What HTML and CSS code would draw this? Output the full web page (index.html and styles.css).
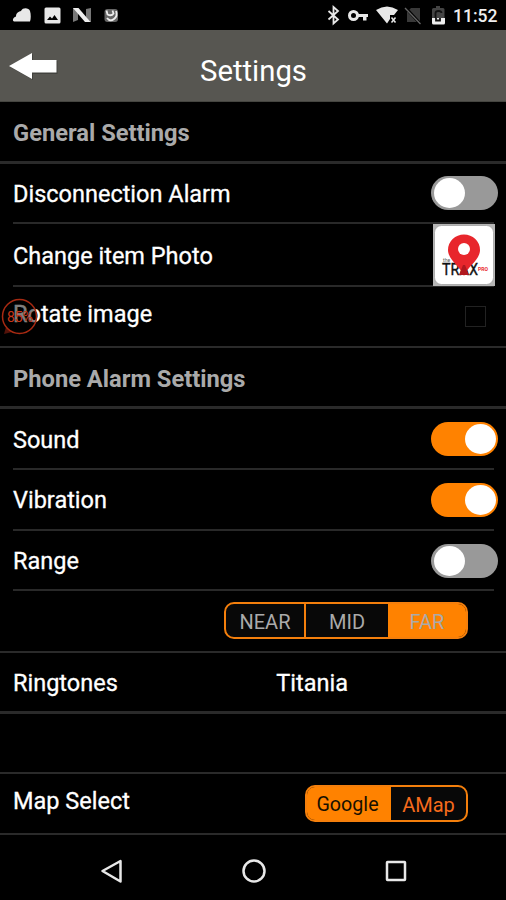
FILE: index.html
```html
<!DOCTYPE html>
<html lang="en">
<head>
<meta charset="utf-8">
<title>Settings</title>
<link rel="stylesheet" href="styles.css">
</head>
<body>
<div class="phone">
  <div class="status">
    <svg class="status-left" width="120" height="30" viewBox="0 0 120 30">
      <path d="M14 21.500c-2-1-1-4 2-5 0-4 3-5 5-5.500 2-4 8-3 9 0 1 3 1 8 0 10.500z" fill="#e8e8e8"/>
      <path d="M46 7.500h13q1.500 0 1.500 1.500v13q0 1.500-1.500 1.500H46q-1.500 0-1.500-1.500V9q0-1.500 1.500-1.500zM47 20h11l-3.500-5-2.500 3.500-2-2z" fill="#e8e8e8" fill-rule="evenodd"/>
      <path d="M73 8h5v12l-5 2zM86 9l5-1v14h-5z" fill="#777"/>
      <path d="M73 8h5.500l12 14H85z" fill="#eee"/>
      <rect x="104.500" y="9" width="13.500" height="13" rx="3" fill="#666"/>
      <path d="M106.500 10.500l1 4q4 2 6-1l-1-3M107 18q3 4 7 1 4-3 2-8" fill="none" stroke="#eee" stroke-width="1.800"/>
    </svg>
    <svg class="status-right" width="125" height="30" viewBox="325 0 125 30">
      <path d="M328.500 11l9.500 8.500-4.500 4V7l4.500 4-9.500 8.500" fill="none" stroke="#e8e8e8" stroke-width="1.800"/>
      <circle cx="353.500" cy="15.500" r="4" fill="none" stroke="#e8e8e8" stroke-width="3"/>
      <path d="M357 14h11v3h-1.500v3.500H363V17h-6z" fill="#e8e8e8"/>
      <path d="M376 10q11-7 22 0l-4 5h-4v4l-3 4.500z" fill="#e8e8e8"/>
      <path d="M391.500 17.500l4 5m0-5l-4 5" stroke="#e8e8e8" stroke-width="1.500"/>
      <path d="M411 8h9v14h-13V12z" fill="#393939"/>
      <path d="M405 7l15.500 17" stroke="#000" stroke-width="3"/>
      <path d="M405 8l15.500 16" stroke="#666" stroke-width="1.300"/>
      <path d="M436 6h4v2h3q1.500 0 1.500 1.500V18H432V9.500q0-1.500 1.500-1.500h2.500z" fill="#444"/>
      <path d="M432 18h13v5q0 1.500-1.500 1.500h-10q-1.500 0-1.500-1.500z" fill="#eee"/>
      <path d="M435.500 18v-5q0-2 3-2t3 2M436 18v2.500h4V18" stroke="#111" stroke-width="1.800" fill="none"/>
    </svg>
    <span class="clock">11:52</span>
  </div>
  <header class="header">
    <svg class="back" width="50" height="30" viewBox="0 0 50 30"><path d="M1 15L24 2v7h24.500v13H24v6z" fill="#42423e"/><path d="M0 14L23 1v7h24.500v12.500H23V27z" fill="#fff"/></svg>
    <h1>Settings</h1>
  </header>
  <main>
    <section class="row heading general"><span>General Settings</span></section>
    <section class="row disconnect inset"><span>Disconnection Alarm</span><i class="toggle"></i></section>
    <section class="row photo inset"><span>Change item Photo</span>
      <svg class="thumb" width="62" height="62" viewBox="0 0 62 62">
        <rect width="62" height="62" fill="#b5b5b5"/><rect x="1.500" y="1.500" width="59" height="59" rx="7" fill="#fff" stroke="#999" stroke-width=".7"/>
        <text x="9" y="51" class="brand" textLength="36" lengthAdjust="spacingAndGlyphs">TRAX</text>
        <path d="M31 52C28 43 15 36 15 26a16 15.500 0 0 1 32 0c0 10-13 17-16 26z" fill="#e8262c"/>
        <circle cx="31" cy="25" r="6" fill="#fff"/>
        <path d="M26 51l4-10h2l4 10z" fill="#b0181f"/>
        <text x="10" y="38" class="tiny">the</text><text x="45" y="47" class="tiny red">PRO</text>
      </svg>
    </section>
    <section class="row rotate"><span>Rotate image</span><i class="check"></i>
      <svg class="stamp" width="40" height="40" viewBox="0 0 40 40">
        <path d="M6 30l-2 7 8-2" fill="#54130a"/><circle cx="19.500" cy="19.500" r="17" fill="#000" fill-opacity=".5" stroke="#a82a12" stroke-width="1.500"/>
        <text x="7" y="25" textLength="26" lengthAdjust="spacingAndGlyphs">85%</text>
      </svg>
    </section>
    <section class="row heading alarm"><span>Phone Alarm Settings</span></section>
    <section class="row sound inset"><span>Sound</span><i class="toggle on"></i></section>
    <section class="row vibration inset"><span>Vibration</span><i class="toggle on"></i></section>
    <section class="row range inset"><span>Range</span><i class="toggle"></i></section>
    <section class="row distances"><div class="segments distance"><span>NEAR</span><span>MID</span><span class="selected">FAR</span></div></section>
    <section class="row ringtones"><span>Ringtones</span><span class="tone">Titania</span></section>
    <section class="row empty"></section>
    <section class="row maps"><span>Map Select</span><div class="segments map"><span class="selected">Google</span><span>AMap</span></div></section>
  </main>
  <nav class="nav">
    <svg width="506" height="65" viewBox="0 835 506 65" fill="none" stroke="#e8e8e8" stroke-width="2.500">
      <path d="M102.500 871L120.500 861v20.500z" stroke-linejoin="round"/><circle cx="254" cy="871" r="10.500"/><rect x="387" y="862" width="18" height="18" rx=".5"/>
    </svg>
  </nav>
</div>
</body>
</html>
```
FILE: styles.css
```css
* { box-sizing: border-box; }
body { margin: 0; background: #000; color: #fff; font-family: Roboto, sans-serif; }
.phone { width: 506px; height: 900px; overflow: hidden; }
.status { height: 30px; display: flex; align-items: center; }
.status-right { margin-left: 205px; }
.clock { font-size: 17.5px; font-weight: 500; line-height: 30px; margin: 2px 0 0 3px; color: #eee; }
.header { height: 72px; background: #575651; display: flex; border-bottom: 1px solid #454540; }
.back { margin: 22px 0 0 9px; }
h1 { margin: 5px 0 0 141px; font-size: 29.3px; font-weight: 400; line-height: 72px; }
.row { display: flex; align-items: center; justify-content: space-between; padding: 0 8px 0 13px; font-size: 23.5px; position: relative; border-bottom: 2px solid #2a2a2a; white-space: nowrap; }
.row > span { -webkit-text-stroke: .3px currentColor; }
.inset { border-bottom: 0; }
.inset::after { content: ""; position: absolute; left: 13px; right: 12px; bottom: 0; height: 2px; background: #292929; }
.heading { color: #aaa; font-weight: 700; font-size: 23.7px; border-bottom-width: 3px; }
.row.heading > span { margin-top: 3px; -webkit-text-stroke: 0; }
.general { height: 62px; }
.disconnect { height: 60px; padding-bottom: 2px; }
.disconnect > span { margin-top: 2px; }
.photo { height: 63px; padding-right: 11px; }
.rotate { height: 61px; padding-right: 20px; }
.rotate > span { margin-top: -6px; }
.alarm { height: 61px; }
.sound, .vibration { height: 61px; padding-bottom: 1px; }
.sound > span { margin-top: 1px; }
.range { height: 60px; }
.distances { height: 62px; justify-content: flex-end; padding: 0 38px 2px 0; }
.ringtones { height: 61px; border-bottom-width: 3px; }
.ringtones > span { margin-top: 2px; }
.empty { height: 60px; }
.maps { height: 61px; padding: 0 38px 1px 13px; }
.maps > span { margin-top: -5px; }
.row > .tone { margin-right: 150px; }
.toggle { width: 67px; height: 34px; border-radius: 17px; background: #999; padding: 2px 3px; display: flex; }
.toggle::before { content: ""; width: 31px; height: 30px; border-radius: 50%; background: #fff; }
.toggle.on { justify-content: flex-end; background: #ff8200; padding-right: 2px; }
.check { width: 21px; height: 21px; border: 1px solid #222; }
.thumb { z-index: 1; margin-top: -1px; }
.brand { font-size: 17px; fill: #111; stroke: #111; stroke-width: .4px; }
.tiny { font-size: 5px; fill: #555; }
.tiny.red { fill: #e8262c; font-weight: 700; }
.stamp { position: absolute; left: 0; top: 10px; }
.stamp text { font-size: 15px; fill: #c73518; }
.segments { display: flex; height: 37px; border: 2px solid #f47f0c; border-radius: 10px; overflow: hidden; background: #080808; font-size: 20px; color: #aaa; }
.segments span { display: flex; align-items: center; justify-content: center; padding-top: 3px; }
.distance { width: 244px; }
.distance span:nth-child(1) { width: 80px; border-right: 2px solid #f47f0c; }
.distance span:nth-child(2) { width: 82px; }
.distance span:nth-child(3) { flex: 1; }
.segments .selected { background: #ff8200; }
.map { width: 163px; color: #f66b1c; }
.map span:first-child { width: 84px; padding-right: 3px; color: #171000; font-size: 19.7px; }
.map span:last-child { flex: 1; }
.nav { height: 65px; }
.nav svg { display: block; }
```
